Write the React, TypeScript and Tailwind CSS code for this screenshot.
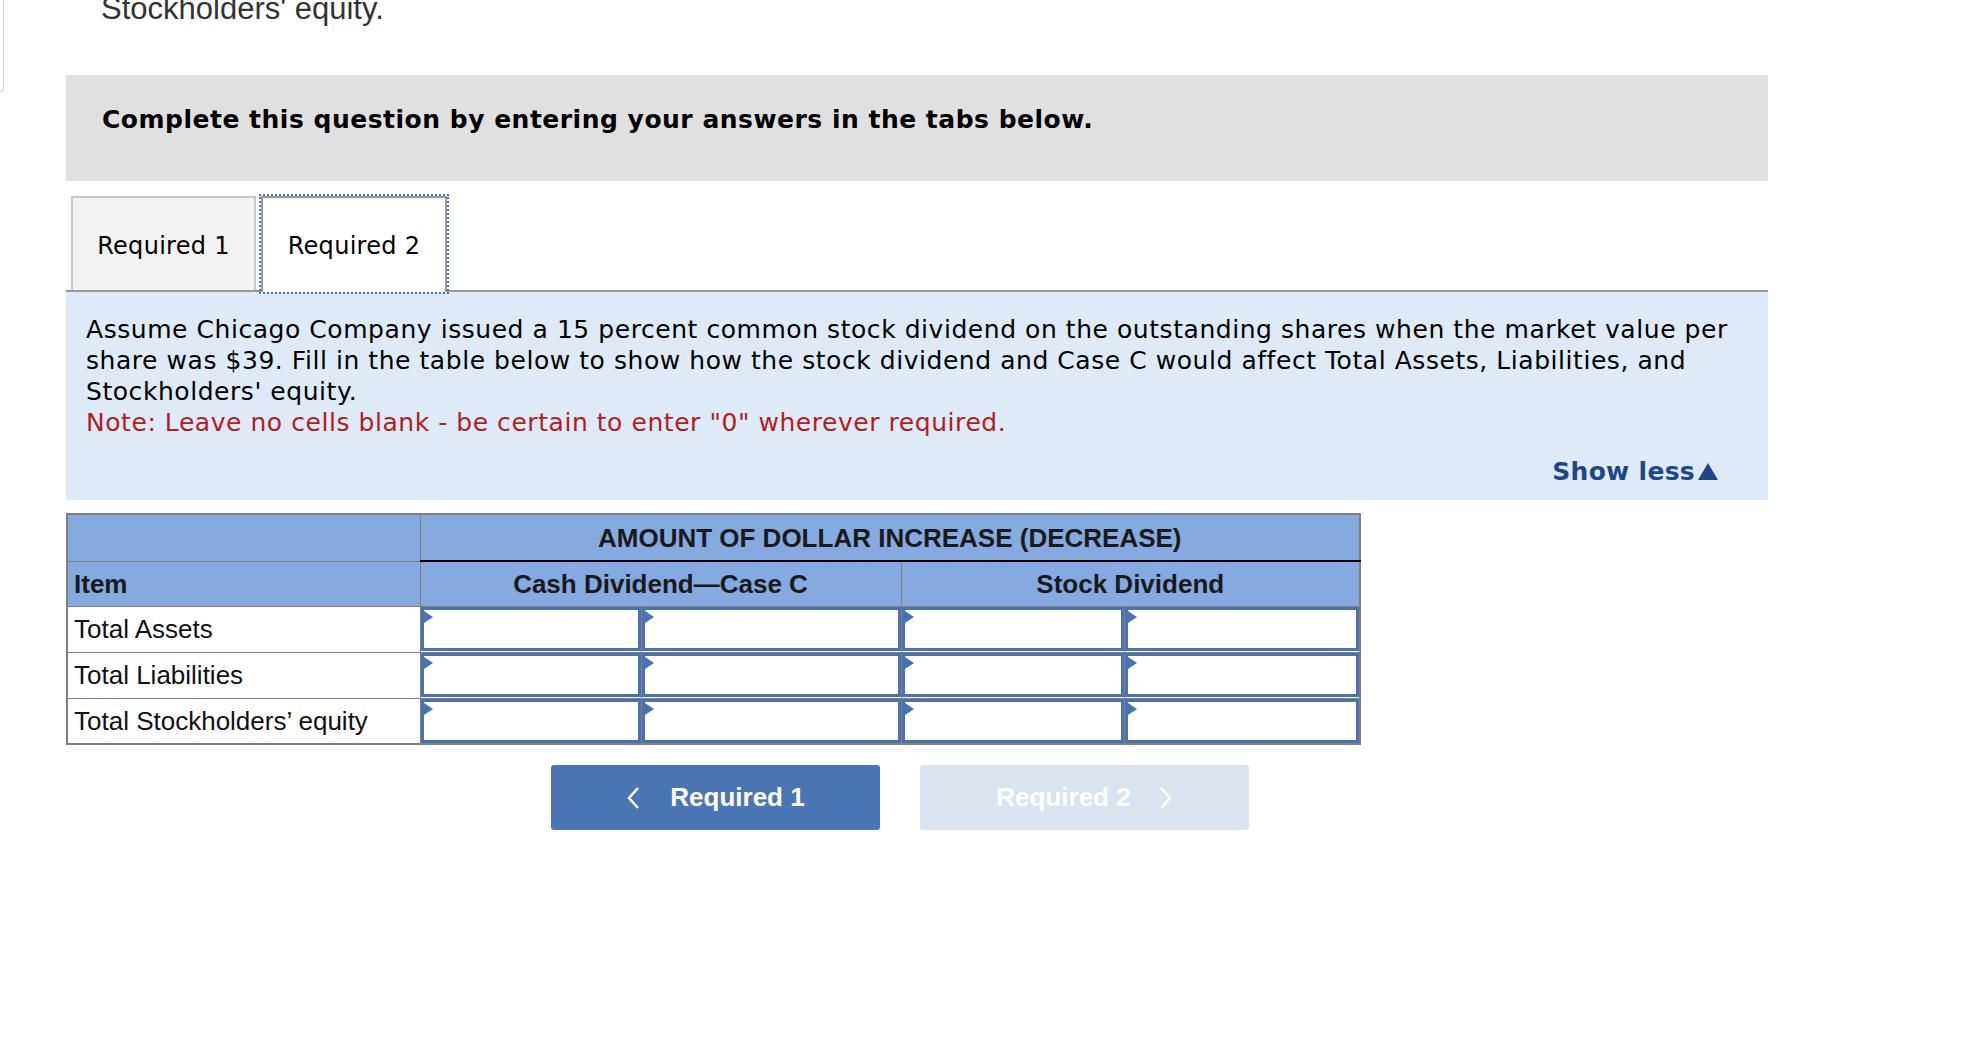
import React from 'react';

const verdana = "font-['DejaVu_Sans',Verdana,sans-serif]";
const arial = "font-['Liberation_Sans',Arial,sans-serif]";

const rows = ['Total Assets', 'Total Liabilities', 'Total Stockholders’ equity'];

const InputCell = ({ w }: { w: string }) => (
  <td className={`border border-[#808080] p-0 ${w}`}>
    <div className="relative h-[44px] border-[3px] border-[#4a72b0] bg-white">
      <svg className="absolute left-[-3px] top-[-1px]" width="12" height="16" viewBox="0 0 12 16">
        <polygon points="0,0 12,8 0,16" fill="#4a72b0" />
      </svg>
    </div>
  </td>
);

const App = () => {
  return (
    <div className="relative min-h-[1042px] w-[1980px] overflow-hidden bg-white pl-[66px] text-black">
      <div className="absolute left-0 top-0 h-[92px] w-[4px] rounded-br-[6px] border-b border-r border-[#d6d6d6]" />

      <div className={`${arial} mt-[-8px] pl-[35px] text-[31px] leading-[34px] text-[#333]`}>
        Stockholders&#39; equity.
      </div>

      <div className="mt-[49px] w-[1702px]">
        <div className="h-[106px] bg-[#e0e0e0] pl-[36px] pt-[30px]">
          <p className={`${verdana} text-[25px] font-bold leading-[30px] tracking-[0.5px]`}>
            Complete this question by entering your answers in the tabs below.
          </p>
        </div>

        <div className="mt-[15px] flex items-end border-b-2 border-[#999] pl-[5px]">
          <button
            className={`${verdana} h-[94px] w-[185px] border-2 border-b-0 border-[#c8c8c8] bg-[#f2f2f2] pt-[4px] text-[24px] tracking-[0.3px]`}
          >
            Required 1
          </button>
          <button
            className={`${verdana} mb-[-2px] ml-[5px] h-[96px] w-[186px] border-2 border-b-0 border-[#999] bg-white pt-[2px] text-[24px] tracking-[0.3px] outline-2 outline-offset-0 outline-dotted outline-[#4a72c4]`}
          >
            Required 2
          </button>
        </div>

        <div className={`${verdana} bg-[#deeaf7] px-[20px] pb-[13px] pt-[22px] text-[25px] leading-[31px] tracking-[0.55px]`}>
          <p>
            Assume Chicago Company issued a 15 percent common stock dividend on the outstanding shares when the market
            value per share was $39. Fill in the table below to show how the stock dividend and Case C would affect
            Total Assets, Liabilities, and Stockholders&#39; equity.
          </p>
          <p className="text-[#b0211d]">Note: Leave no cells blank - be certain to enter &quot;0&quot; wherever required.</p>
          <div className="mt-[18px] flex justify-end pr-[30px]">
            <span className="flex items-center font-bold tracking-[0.3px] text-[#1f4788]">
              Show less
              <svg className="ml-[3px]" width="20" height="17" viewBox="0 0 20 17">
                <polygon points="10,0 20,17 0,17" fill="#1f4788" />
              </svg>
            </span>
          </div>
        </div>
      </div>

      <table className={`${arial} mt-[13px] border-collapse border-2 border-[#808080] text-[26px] leading-none`}>
        <thead>
          <tr className="h-[47px] bg-[#84aadf]">
            <th className="w-[353px] border border-[#808080]" />
            <th colSpan={4} className="border border-[#808080] border-b-2 border-b-black font-bold text-[#1a1a1a]">
              AMOUNT OF DOLLAR INCREASE (DECREASE)
            </th>
          </tr>
          <tr className="h-[45px] bg-[#84aadf]">
            <th className="border border-[#808080] pl-[6px] text-left font-bold text-[#1a1a1a]">Item</th>
            <th colSpan={2} className="border border-[#808080] font-bold text-[#1a1a1a]">
              Cash Dividend—Case C
            </th>
            <th colSpan={2} className="border border-[#808080] font-bold text-[#1a1a1a]">
              Stock Dividend
            </th>
          </tr>
        </thead>
        <tbody>
          {rows.map((r) => (
            <tr key={r} className="h-[46px]">
              <td className="border border-[#808080] pl-[6px] text-[#111]">{r}</td>
              <InputCell w="w-[221px]" />
              <InputCell w="w-[260px]" />
              <InputCell w="w-[223px]" />
              <InputCell w="w-[236px]" />
            </tr>
          ))}
        </tbody>
      </table>

      <div className={`${arial} ml-[485px] mt-[20px] flex gap-[40px] text-[26px] font-bold text-white`}>
        <button className="flex h-[65px] w-[329px] items-center justify-center gap-[30px] rounded-[3px] bg-[#4a76b4]">
          <svg width="14" height="24" viewBox="0 0 14 24" fill="none" stroke="white" strokeWidth="2.5">
            <path d="M12 2 L3 12 L12 22" />
          </svg>
          <span>Required 1</span>
        </button>
        <button className="flex h-[65px] w-[329px] items-center justify-center gap-[28px] rounded-[3px] bg-[#dae3ef]">
          <span>Required 2</span>
          <svg width="14" height="24" viewBox="0 0 14 24" fill="none" stroke="white" strokeWidth="2.5">
            <path d="M2 2 L11 12 L2 22" />
          </svg>
        </button>
      </div>
    </div>
  );
};

export default App;
